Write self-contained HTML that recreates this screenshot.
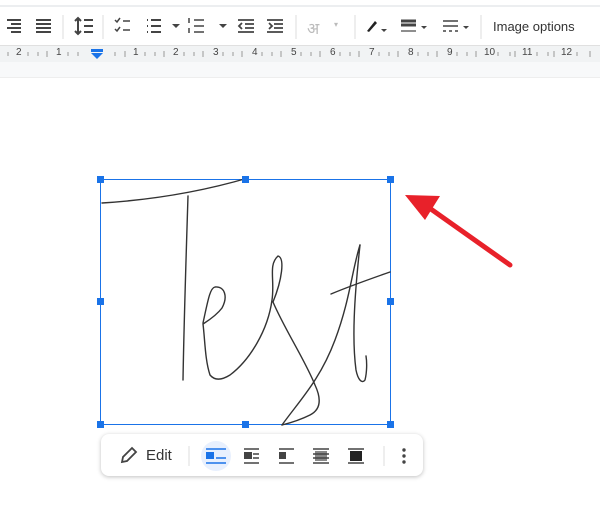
<!DOCTYPE html>
<html><head><style>
body{margin:0;width:600px;height:521px;overflow:hidden;background:#fff;font-family:"Liberation Sans",sans-serif;position:relative}
.tb{position:absolute;top:5px;left:0;width:600px;height:40px;background:#fff;border-top:2px solid #eceef0}
.ru{position:absolute;top:45px;left:0;width:600px;height:16px;background:#f1f3f4;border-top:1px solid #e0e0e0;border-bottom:1px solid #dadce0;font-size:10px;color:#444}
.gr{position:absolute;top:62px;left:0;width:600px;height:15px;background:#f8f9fa;border-bottom:1px solid #eee}
.t{position:absolute;font-size:13px;color:#333}
.pop{position:absolute;left:101px;top:434px;width:322px;height:42px;background:#fff;border-radius:8px;box-shadow:0 1px 4px rgba(0,0,0,.25)}
</style></head><body>
<div class="tb">
<svg width="600" height="40" style="position:absolute;left:0;top:0" stroke="#444" stroke-width="2" fill="none">
<path d="M7 13h14M11 17h10M7 21h14M11 25h10"/>
<path d="M36 13h15M36 17h15M36 21h15M36 25h15"/>
<line x1="63" y1="8" x2="63" y2="32" stroke="#ddd" stroke-width="1"/>
<path d="M78 11v16M75 14l3-3 3 3M75 24l3 3 3-3M84 13h9M84 19h9M84 25h9"/>
<line x1="103" y1="8" x2="103" y2="32" stroke="#ddd" stroke-width="1"/>
<path d="M115 13l2 2 3-4M115 22l2 2 3-4M123 14h7M123 23h7" stroke-width="1.5"/>
<path d="M147 13h1M147 19h1M147 25h1M151 13h10M151 19h10M151 25h10"/>
<path d="M172 17l4 4 4-4z" fill="#444" stroke="none"/>
<path d="M194 13h10M194 19h10M194 25h10M189 11v5M189 21v5" stroke-width="1.5"/>
<path d="M219 17l4 4 4-4z" fill="#444" stroke="none"/>
<path d="M238 13h16M245 17h9M245 21h9M238 25h16M242 16l-3 3 3 3" stroke-width="1.8"/>
<path d="M267 13h16M274 17h9M274 21h9M267 25h16M269 16l3 3-3 3" stroke-width="1.8"/>
<line x1="296" y1="8" x2="296" y2="32" stroke="#ddd" stroke-width="1"/>
<line x1="355" y1="8" x2="355" y2="32" stroke="#ddd" stroke-width="1"/>
<path d="M367 24l8-10 2 2-8 9z" fill="#222" stroke="none"/>
<path d="M381 22l3 3 3-3z" fill="#444" stroke="none"/>
<path d="M401 14h15M401 18h15" stroke-width="3"/><path d="M401 24h15" stroke-width="1.2"/>
<path d="M421 19l3 3 3-3z" fill="#444" stroke="none"/>
<path d="M443 14h15M443 19h15M443 24h3M449 24h3M455 24h3" stroke-width="1.5"/>
<path d="M463 19l3 3 3-3z" fill="#444" stroke="none"/>
<line x1="481" y1="8" x2="481" y2="32" stroke="#ddd" stroke-width="1"/>
</svg>
<div class="t" style="left:307px;top:10px;font-size:16px;color:#bbb">अ</div>
<div class="t" style="left:334px;top:13px;font-size:8px;color:#bbb">▾</div>
<div class="t" style="left:493px;top:12px;font-size:13px;color:#333">Image options</div>
</div>
<div class="ru">
<svg width="600" height="16" style="position:absolute;left:0;top:0"><g stroke="#999" stroke-width="1">
<path d="M8 6v4M38 6v4M47 5v6M28 6v4M68 6v4M78 6v4M115 6v4M125 5v6M145 6v4M155 6v4M164 5v6M184 6v4M194 6v4M203 5v6M223 6v4M233 6v4M242 5v6M262 6v4M272 6v4M281 5v6M301 6v4M311 6v4M320 5v6M340 6v4M350 6v4M359 5v6M379 6v4M389 6v4M398 5v6M418 6v4M428 6v4M437 5v6M457 6v4M467 6v4M476 5v6M498 6v4M510 6v4M515 5v6M537 6v4M548 6v4M554 5v6M577 6v4M590 5v6"/></g></svg>
<span style="position:absolute;left:16px;top:1px">2</span>
<span style="position:absolute;left:56px;top:1px">1</span>
<svg style="position:absolute;left:90px;top:3px" width="14" height="10"><rect x="1" y="0" width="12" height="3" fill="#1a73e8"/><path d="M1 4h12l-6 6z" fill="#1a73e8"/></svg>
<span style="position:absolute;left:133px;top:1px">1</span>
<span style="position:absolute;left:173px;top:1px">2</span>
<span style="position:absolute;left:213px;top:1px">3</span>
<span style="position:absolute;left:252px;top:1px">4</span>
<span style="position:absolute;left:291px;top:1px">5</span>
<span style="position:absolute;left:330px;top:1px">6</span>
<span style="position:absolute;left:369px;top:1px">7</span>
<span style="position:absolute;left:408px;top:1px">8</span>
<span style="position:absolute;left:447px;top:1px">9</span>
<span style="position:absolute;left:484px;top:1px">10</span>
<span style="position:absolute;left:522px;top:1px">11</span>
<span style="position:absolute;left:561px;top:1px">12</span>
</div>
<div class="gr"></div>
<svg width="600" height="521" style="position:absolute;left:0;top:0" fill="none">
<rect x="100.5" y="179.5" width="290" height="245" stroke="#1a73e8" stroke-width="1"/>
<g stroke="#333" stroke-width="1.4" stroke-linecap="round">
<path d="M102 203C150 200 200 192 248 178"/>
<path d="M188 196C186 260 184 320 183 380"/>
<path d="M203 323C208 300 210 288 215 287C225 286 228 297 222 308C216 316 206 322 203 324C205 340 205 360 210 375C215 381 222 380 230 375C250 360 268 330 272 300C275 280 268 265 278 256C285 258 282 280 273 302C285 330 305 360 315 385C322 400 320 410 310 415C300 420 290 423 282 425"/>
<path d="M282 425C300 400 320 380 335 340C350 300 352 270 360 245"/>
<path d="M331 294C350 286 370 279 390 272"/>
<path d="M360 245C354 300 352 340 356 370C358 380 362 384 365 380C367 372 367 362 366 356"/>
</g>
<g fill="#1a73e8">
<rect x="97" y="176" width="7" height="7"/><rect x="242" y="176" width="7" height="7"/><rect x="387" y="176" width="7" height="7"/>
<rect x="97" y="298" width="7" height="7"/><rect x="387" y="298" width="7" height="7"/>
<rect x="97" y="421" width="7" height="7"/><rect x="242" y="421" width="7" height="7"/><rect x="387" y="421" width="7" height="7"/>
</g>
<path d="M510 265L428 207" stroke="#e8212a" stroke-width="5" stroke-linecap="round"/>
<path d="M405 195L440 196L425 220z" fill="#e8212a"/>
</svg>
<div class="pop">
<svg width="322" height="42" style="position:absolute;left:0;top:0" fill="none" stroke="#444" stroke-width="1.8">
<path d="M21 28l1-5 9-9 4 4-9 9z"/>
<line x1="88" y1="12" x2="88" y2="32" stroke="#ddd" stroke-width="1"/>
<circle cx="115" cy="22" r="15" fill="#e8f0fe" stroke="none"/>
<rect x="105" y="18" width="8" height="7" fill="#1a73e8" stroke="none"/>
<path d="M105 15h20M115 24h10M105 29h20" stroke="#1a73e8" stroke-width="1.5"/>
<rect x="143" y="18" width="8" height="7" fill="#444" stroke="none"/>
<path d="M143 15h15M152 20h6M152 24h6M143 29h15" stroke-width="1.5"/>
<rect x="178" y="18" width="7" height="7" fill="#444" stroke="none"/>
<path d="M178 15h15M178 29h15" stroke-width="1.5"/>
<rect x="214" y="17" width="12" height="10" fill="#888" stroke="none"/>
<path d="M212 15h16M212 20h16M212 24h16M212 29h16" stroke-width="1.5"/>
<rect x="249" y="17" width="12" height="10" fill="#222" stroke="none"/>
<path d="M247 15h16M247 29h16" stroke-width="1.5"/>
<line x1="283" y1="12" x2="283" y2="32" stroke="#ddd" stroke-width="1"/>
<g fill="#444" stroke="none"><circle cx="303" cy="16" r="1.7"/><circle cx="303" cy="22" r="1.7"/><circle cx="303" cy="28" r="1.7"/></g>
</svg>
<div class="t" style="left:45px;top:13px;font-size:15px;color:#333">Edit</div>
</div>
</body></html>
